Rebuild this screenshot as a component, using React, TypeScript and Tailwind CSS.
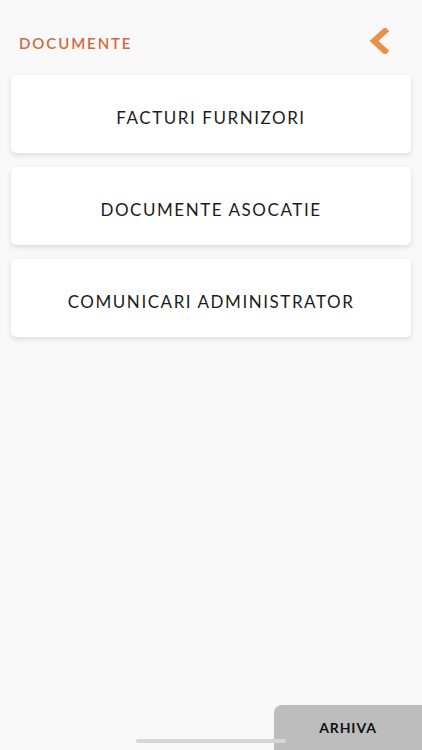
import React from "react";

const items = ["FACTURI FURNIZORI", "DOCUMENTE ASOCATIE", "COMUNICARI ADMINISTRATOR"];

const App = () => {
  return (
    <div className="relative w-[422px] h-[750px] bg-[#f8f8f8] font-['Lato',sans-serif] overflow-hidden flex flex-col">
      {/* header */}
      <div className="flex items-center justify-between pl-[19px] pr-[32px] pt-[11px] h-[75px]">
        <h1 className="text-[15px] font-semibold text-[#d4683c] tracking-[1.9px]">DOCUMENTE</h1>
        <button className="-mt-[4px]">
          <svg width="22" height="26" viewBox="0 0 22 26">
            <path d="M17 3 L6 13 L17 23" fill="none" stroke="#e8914a" strokeWidth="6" strokeLinejoin="miter" strokeLinecap="square" />
          </svg>
        </button>
      </div>

      {/* list */}
      <div className="flex flex-col gap-[14px] px-[11px]">
        {items.map((t) => (
          <button
            key={t}
            className="h-[78px] w-full bg-white rounded-[5px] shadow-[0_2px_5px_rgba(0,0,0,0.12)] flex items-center justify-center pt-[7px] text-[17px] text-[#1c1c1c] tracking-[1.55px]"
          >
            {t}
          </button>
        ))}
      </div>

      <div className="flex-1" />

      {/* bottom */}
      <div className="flex justify-end">
        <button className="w-[148px] h-[45px] bg-[#bdbdbd] rounded-tl-[8px] text-[14px] font-bold text-[#111] tracking-[0.9px]">
          ARHIVA
        </button>
      </div>
      <div className="absolute left-[136px] bottom-[7px] w-[150px] h-[4px] rounded-full bg-[#d6d6d6]" />
    </div>
  );
};

export default App;
